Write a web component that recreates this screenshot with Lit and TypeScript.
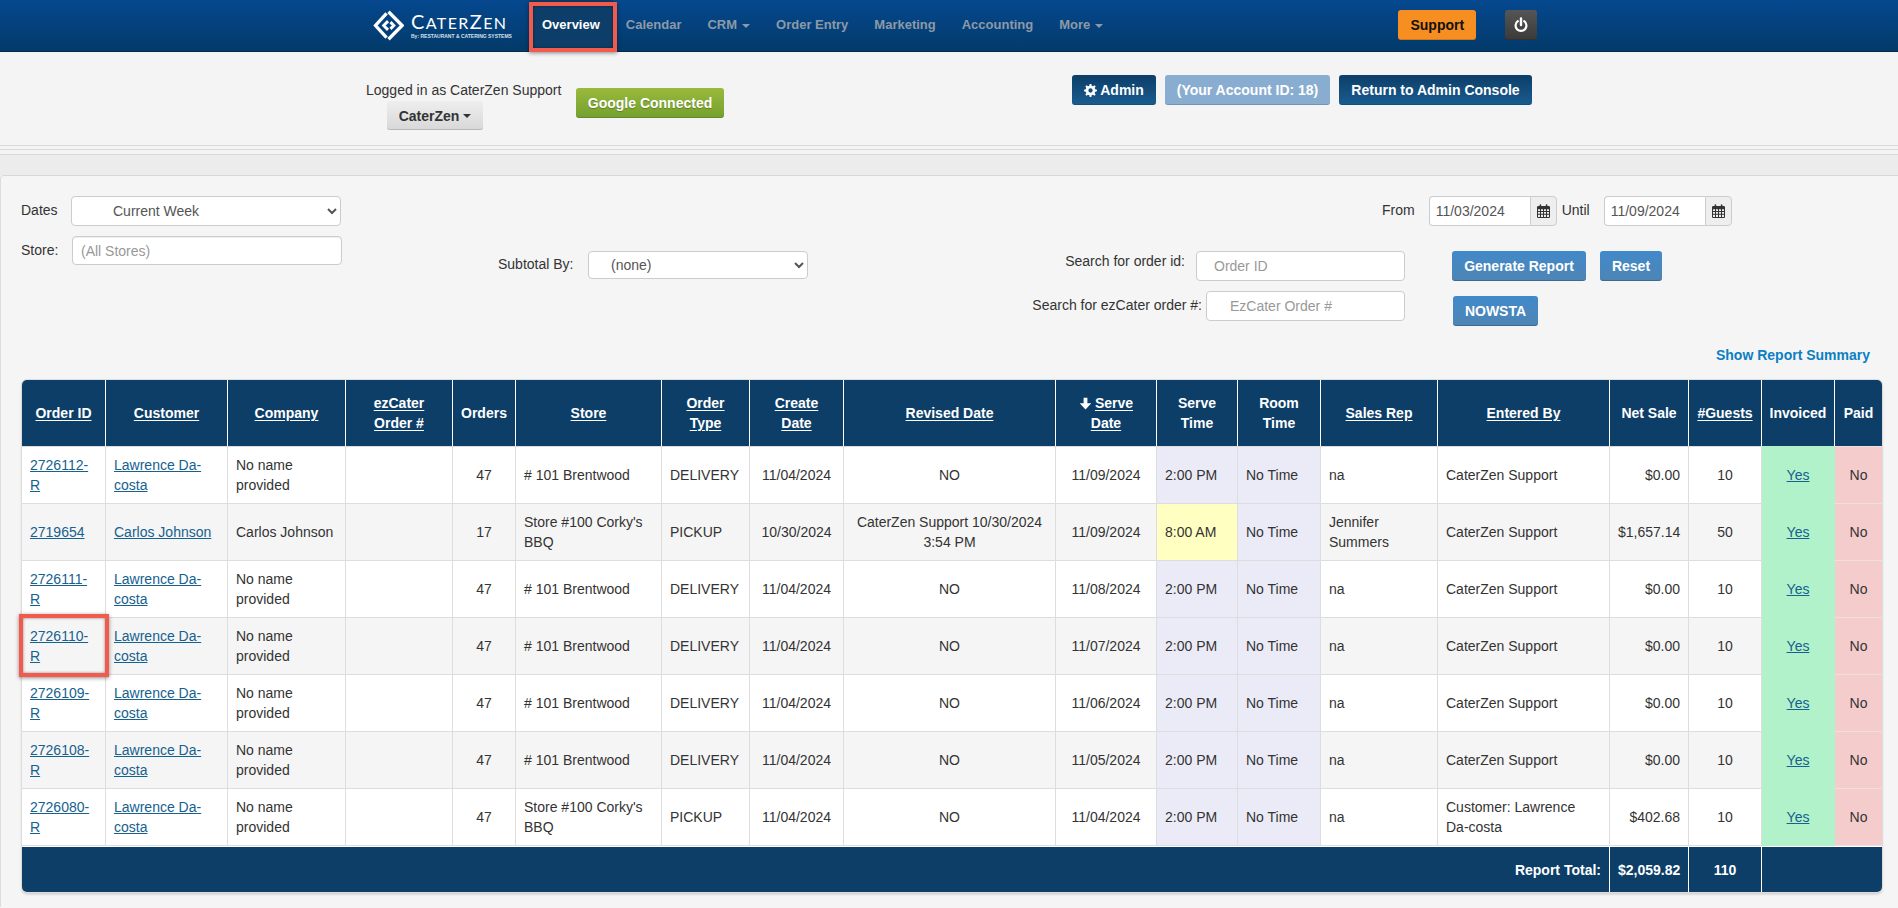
import { LitElement, html, css } from "lit";
import { customElement } from "lit/decorators.js";

type Row = {
  id: string; cust: string; comp: string; ord: string; store: string; type: string;
  created: string; revised: string; serve: string; time: string; rep: string;
  by: string; net: string; guests: string;
};

const LD = "Lawrence Da-costa";
const NN = "No name provided";
const S1 = "# 101 Brentwood";
const S2 = "Store #100 Corky's BBQ";
const CZ = "CaterZen Support";

const rows: Row[] = [
  { id: "2726112-R", cust: LD, comp: NN, ord: "47", store: S1, type: "DELIVERY", created: "11/04/2024", revised: "NO", serve: "11/09/2024", time: "2:00 PM", rep: "na", by: CZ, net: "$0.00", guests: "10" },
  { id: "2719654", cust: "Carlos Johnson", comp: "Carlos Johnson", ord: "17", store: S2, type: "PICKUP", created: "10/30/2024", revised: "CaterZen Support 10/30/2024 3:54 PM", serve: "11/09/2024", time: "8:00 AM", rep: "Jennifer Summers", by: CZ, net: "$1,657.14", guests: "50" },
  { id: "2726111-R", cust: LD, comp: NN, ord: "47", store: S1, type: "DELIVERY", created: "11/04/2024", revised: "NO", serve: "11/08/2024", time: "2:00 PM", rep: "na", by: CZ, net: "$0.00", guests: "10" },
  { id: "2726110-R", cust: LD, comp: NN, ord: "47", store: S1, type: "DELIVERY", created: "11/04/2024", revised: "NO", serve: "11/07/2024", time: "2:00 PM", rep: "na", by: CZ, net: "$0.00", guests: "10" },
  { id: "2726109-R", cust: LD, comp: NN, ord: "47", store: S1, type: "DELIVERY", created: "11/04/2024", revised: "NO", serve: "11/06/2024", time: "2:00 PM", rep: "na", by: CZ, net: "$0.00", guests: "10" },
  { id: "2726108-R", cust: LD, comp: NN, ord: "47", store: S1, type: "DELIVERY", created: "11/04/2024", revised: "NO", serve: "11/05/2024", time: "2:00 PM", rep: "na", by: CZ, net: "$0.00", guests: "10" },
  { id: "2726080-R", cust: LD, comp: NN, ord: "47", store: S2, type: "PICKUP", created: "11/04/2024", revised: "NO", serve: "11/04/2024", time: "2:00 PM", rep: "na", by: "Customer: Lawrence Da-costa", net: "$402.68", guests: "10" },
];

const widths = [84, 122, 118, 107, 63, 146, 88, 94, 212, 101, 81, 83, 117, 172, 79, 73, 73, 47];

const calIcon = html`<svg class="cal" viewBox="0 0 13 14" width="13" height="14"><path fill="#333" d="M0 3.2Q0 2 1.2 2H2.6V1.2Q2.6 .3 3.4 .3T4.2 1.2V2H8.8V1.2Q8.8 .3 9.6 .3T10.4 1.2V2H11.8Q13 2 13 3.2V12.8Q13 14 11.8 14H1.2Q0 14 0 12.8ZM1 5.2V7H3V5.2ZM4 5.2V7H6V5.2ZM7 5.2V7H9V5.2ZM10 5.2V7H12V5.2ZM1 8V9.8H3V8ZM4 8V9.8H6V8ZM7 8V9.8H9V8ZM10 8V9.8H12V8ZM1 10.8V13H3V10.8ZM4 10.8V13H6V10.8ZM7 10.8V13H9V10.8ZM10 10.8V13H12V10.8Z" fill-rule="evenodd"/></svg>`;

function gearPath(): string {
  const pts: string[] = [];
  const teeth = 8;
  for (let i = 0; i < teeth; i++) {
    const a = (i / teeth) * Math.PI * 2;
    const w = Math.PI / teeth;
    const seq: [number, number][] = [
      [9, a - w * 0.62],
      [12, a - w * 0.34],
      [12, a + w * 0.34],
      [9, a + w * 0.62],
    ];
    for (const [r, t] of seq) {
      pts.push(`${(12 + r * Math.sin(t)).toFixed(2)} ${(12 - r * Math.cos(t)).toFixed(2)}`);
    }
  }
  return `M${pts.join("L")}ZM12 8a4 4 0 1 0 0 8a4 4 0 0 0 0-8Z`;
}

const cogIcon = html`<svg class="cog" viewBox="0 0 24 24" width="13" height="13"><path fill="#fff" fill-rule="evenodd" d=${gearPath()} /></svg>`;

const powerIcon = html`<svg viewBox="0 0 14 16" width="14" height="16"><path d="M7 1.5V8" stroke="#fff" stroke-width="2.4" stroke-linecap="round" fill="none"/><path d="M3.8 4.2A5.4 5.4 0 1 0 10.2 4.2" stroke="#fff" stroke-width="2.2" stroke-linecap="round" fill="none"/></svg>`;

const downArrow = html`<svg viewBox="0 0 13 13" width="13" height="13" class="down"><path fill="#fff" d="M4.6 .8h3.8v5.4h3.9L6.5 12.4.7 6.2h3.9z"/></svg>`;

@customElement("app-root")
export class AppRoot extends LitElement {
  static styles = css`
    :host { display: block; height: 908px; overflow: hidden; font-family: "Liberation Sans", Arial, sans-serif; font-size: 14px; line-height: 20px; color: #333; background: #f5f5f5; }
    * { box-sizing: border-box; }

    .nav { height: 52px; background: linear-gradient(#05488f, #033a69); border-bottom: 1px solid #022a4c; display: flex; align-items: flex-start; padding-left: 373px; position: relative; }
    .logo { display: flex; width: 143px; height: 51px; align-items: flex-start; padding-top: 10px; gap: 7px; flex: none; }
    .logo-text { display: flex; flex-direction: column; color: #fff; margin-top: -1px; }
    .logo-name { font-family: Lato, "Liberation Sans", sans-serif; font-size: 20px; line-height: 24px; height: 24px; letter-spacing: 1.4px; white-space: nowrap; font-weight: 400; }
    .logo-name small { font-size: 16px; }
    .logo-sub { font-size: 5px; line-height: 6px; height: 6px; font-weight: 700; white-space: nowrap; color: #d5e0ea; }
    .nav-items { display: flex; height: 51px; flex: none; margin-left: 13px; }
    .nav-item { font-size: 13px; font-weight: 700; color: #8c9aa7; padding: 15px 13px 0; position: relative; white-space: nowrap; line-height: 20px; }
    .nav-item.active { color: #fff; background: #0d3e69; }
    .nav-item .caret { margin-left: 5px; border-top-color: #8c9aa7; }
    .caret { display: inline-block; width: 0; height: 0; vertical-align: middle; border-top: 4px solid #333; border-left: 4px solid transparent; border-right: 4px solid transparent; }
    .mark { position: absolute; z-index: 5; pointer-events: none; border: 4px solid #f15a4c; box-shadow: 0 1px 4px rgba(0,0,0,.45), inset 0 0 3px rgba(0,0,0,.45); }
    .mark.nav-mark { left: 0; right: -4px; top: 2px; bottom: -1px; }
    .nav-right { display: flex; gap: 29px; margin-left: 282px; padding-top: 10px; }
    .btn { display: inline-flex; align-items: center; justify-content: center; height: 30px; padding: 0 12px; border-radius: 3px; font-size: 14px; font-weight: 700; color: #fff; border: 0; white-space: nowrap; box-shadow: inset 0 -1px 0 rgba(0,0,0,.15); font-family: inherit; }
    .support { background: #f68e21; color: #111; width: 78px; padding: 0; }
    .power { background: linear-gradient(#555, #3a3a3a); width: 32px; padding: 0; }

    .head { height: 93px; background: #f4f4f4; display: flex; align-items: flex-start; padding-left: 366px; }
    .who { width: 196px; padding-top: 28px; display: flex; flex-direction: column; align-items: flex-start; flex: none; white-space: nowrap; }
    .tenant { margin: 1px 0 0 21px; height: 29px; width: 96px; padding: 0; background: linear-gradient(#eee, #d8d8d8); color: #333; }
    .tenant .caret { margin-left: 4px; }
    .google { margin: 36px 0 0 14px; width: 148px; padding: 0; background: linear-gradient(#9ab93c, #74a02e); text-shadow: 0 1px 1px rgba(0,0,0,.25); flex: none; }
    .admin { display: flex; gap: 9px; margin: 23px 0 0 348px; }
    .dark { background: linear-gradient(#0c3e68, #1a5c90); }
    .dark .cog { margin-right: 3px; }
    .w-admin { width: 84px; padding: 0; }
    .light { background: #89add0; width: 165px; padding: 0; }
    .w-return { width: 193px; padding: 0; }

    .rules { height: 30px; background: #ececec; border-top: 1px solid #d9d9d9; display: flex; flex-direction: column; }
    .rules i { display: block; background: #f4f4f4; border-bottom: 1px solid #d9d9d9; }
    .rules i.one { height: 4px; }
    .rules i.two { height: 5px; }
    .panel { background: #f5f5f5; border-top: 1px solid #d8d8d8; border-left: 1px solid #ddd; border-radius: 4px 0 0 0; padding: 20px 0 0 20px; height: 732px; }

    .filters { display: flex; height: 160px; align-items: flex-start; }
    .col-a { width: 477px; flex: none; display: flex; flex-direction: column; gap: 10px; }
    .field { display: flex; align-items: flex-start; }
    .field label { white-space: nowrap; line-height: 20px; }
    .col-a label { width: 50px; padding-top: 4px; flex: none; }
    select, input { font-family: inherit; font-size: 14px; color: #555; background: #fff; border: 1px solid #ccc; border-radius: 4px; height: 30px; outline: 0; }
    input::placeholder { color: #999; opacity: 1; }
    input.inset { box-shadow: inset 0 1px 1px rgba(0,0,0,.075); }
    .sel-dates { width: 270px; padding-left: 37px; }
    .in-store { width: 270px; padding-left: 8px; height: 29px; margin-left: 1px; }
    .col-b { width: 534px; flex: none; margin-top: 55px; }
    .col-b label { width: 90px; flex: none; padding-top: 3px; }
    .sel-sub { width: 220px; padding-left: 18px; height: 28px; }
    .col-c { flex: 1; display: flex; flex-direction: column; }
    .dates-row { display: flex; align-items: flex-start; padding-left: 350px; }
    .dates-row label { padding-top: 4px; }
    .dp { display: flex; height: 30px; flex: none; }
    .dp input { width: 101px; border-radius: 4px 0 0 4px; padding-left: 6px; border-right: 0; }
    .dp .addon { width: 27px; background: #eee; border: 1px solid #ccc; border-radius: 0 4px 4px 0; display: flex; align-items: center; justify-content: center; }
    .dp.first { margin: 0 5px 0 14px; }
    .dp.second { margin-left: 14px; }
    .search-row { display: flex; margin-top: 25px; align-items: flex-start; }
    .search { width: 373px; flex: none; display: flex; flex-direction: column; gap: 10px; }
    .search .field { justify-content: flex-end; }
    .search label { padding-top: 0; }
    .s-id label { margin-right: 11px; }
    .s-id input { width: 209px; padding-left: 17px; }
    .s-ez label { margin-right: 4px; padding-top: 4px; }
    .s-ez input { width: 199px; padding-left: 23px; }
    .actions { margin-left: 47px; display: flex; flex-direction: column; gap: 15px; align-items: flex-start; }
    .action-line { display: flex; gap: 14px; }
    .blue { background: linear-gradient(#4189ca, #4e85b4); padding: 0; box-shadow: inset 0 -1px 0 rgba(0,0,0,.2); }
    .w-gen { width: 134px; }
    .w-reset { width: 62px; }
    .w-now { width: 85px; margin-left: 1px; }

    .summary-line { display: flex; justify-content: flex-end; padding-right: 28px; margin-top: -11px; height: 35px; }
    .summary { color: #0b7fc2; font-weight: 700; font-size: 14px; }

    .table-wrap { width: 1860px; margin: 0 0 0 1px; border-radius: 5px; overflow: visible; box-shadow: 0 0 0 1px #ddd, 0 2px 3px rgba(0,0,0,.2); }
    table { border-collapse: separate; border-spacing: 0; table-layout: fixed; width: 1860px; font-size: 14px; }
    th { background: #0c3e68; color: #fff; font-weight: 700; text-align: center; vertical-align: middle; padding: 13px 2px; border-right: 1px solid #fff; height: 66px; }
    th:first-child { border-top-left-radius: 5px; }
    th:last-child { border-right: 0; border-top-right-radius: 5px; }
    th u { text-underline-offset: 2px; }
    th .down { vertical-align: -2px; margin-right: 3px; }
    td { padding: 8px; vertical-align: middle; border-right: 1px solid #ddd; border-top: 1px solid #ddd; height: 57px; background: #fff; position: relative; }
    tbody tr:nth-child(even) td { background: #f5f5f5; }
    tbody tr:last-child td { border-bottom: 1px solid #ddd; height: 58px; }
    td:last-child { border-right: 0; }
    td.c { text-align: center; }
    td.r { text-align: right; }
    a { color: #15618f; text-decoration: underline; text-underline-offset: 1px; }
    tbody tr td.lav { background: #ebebf7; }
    tbody tr td.yel { background: #ffffc2; }
    tbody tr td.inv { background: #b2f2ca; border-color: #b2f2ca; }
    tbody tr td.paid { background: #f5cccc; border-color: #f0dede; }
    .mark.id-mark { left: -3px; right: -4px; top: -4px; height: 63px; }
    tfoot td { background: #0c3e68; color: #fff; font-weight: 700; border-right: 1px solid #fff; border-bottom: 0; border-top: 1px solid #fff; height: 46px; }
    tfoot td:last-child { border-right: 0; border-bottom-right-radius: 5px; }
    tfoot td:first-child { border-bottom-left-radius: 5px; }
  `;

  render() {
    return html`
      <div class="nav">
        <div class="logo">
          <svg viewBox="0 0 32 32" width="31" height="31">
            <path fill="none" stroke="#fff" stroke-width="3.4" d="M14 3.6L2.6 16L14 28.4"/>
            <path fill="none" stroke="#fff" stroke-width="3.4" d="M16 1.8L30 16L16 30.2"/>
            <path fill="none" stroke="#fff" stroke-width="3" d="M15.5 11.5L11 16L15.5 20.5"/>
            <path fill="none" stroke="#fff" stroke-width="3" d="M18 12.5L21.5 16L18 19.5"/>
          </svg>
          <div class="logo-text">
            <span class="logo-name">C<small>ATER</small>Z<small>EN</small></span>
            <span class="logo-sub">By: RESTAURANT &amp; CATERING SYSTEMS</span>
          </div>
        </div>
        <div class="nav-items">
          <div class="nav-item active">Overview<span class="mark nav-mark"></span></div>
          <div class="nav-item">Calendar</div>
          <div class="nav-item">CRM<span class="caret"></span></div>
          <div class="nav-item">Order Entry</div>
          <div class="nav-item">Marketing</div>
          <div class="nav-item">Accounting</div>
          <div class="nav-item">More<span class="caret"></span></div>
        </div>
        <div class="nav-right">
          <div class="btn support">Support</div>
          <div class="btn power">${powerIcon}</div>
        </div>
      </div>

      <div class="head">
        <div class="who">
          <span>Logged in as CaterZen Support</span>
          <div class="btn tenant">CaterZen<span class="caret"></span></div>
        </div>
        <div class="btn google">Google Connected</div>
        <div class="admin">
          <div class="btn dark w-admin">${cogIcon}Admin</div>
          <div class="btn light">(Your Account ID: 18)</div>
          <div class="btn dark w-return">Return to Admin Console</div>
        </div>
      </div>

      <div class="rules"><i class="one"></i><i class="two"></i></div>

      <div class="panel">
        <div class="filters">
          <div class="col-a">
            <div class="field">
              <label>Dates</label>
              <select class="sel-dates"><option>Current Week</option></select>
            </div>
            <div class="field">
              <label>Store:</label>
              <input class="in-store inset" placeholder="(All Stores)" />
            </div>
          </div>
          <div class="col-b">
            <div class="field">
              <label>Subtotal By:</label>
              <select class="sel-sub"><option>(none)</option></select>
            </div>
          </div>
          <div class="col-c">
            <div class="dates-row">
              <label>From</label>
              <div class="dp first"><input value="11/03/2024" /><div class="addon">${calIcon}</div></div>
              <label>Until</label>
              <div class="dp second"><input value="11/09/2024" /><div class="addon">${calIcon}</div></div>
            </div>
            <div class="search-row">
              <div class="search">
                <div class="field s-id"><label>Search for order id:</label><input placeholder="Order ID" /></div>
                <div class="field s-ez"><label>Search for ezCater order #:</label><input placeholder="EzCater Order #" /></div>
              </div>
              <div class="actions">
                <div class="action-line">
                  <div class="btn blue w-gen">Generate Report</div>
                  <div class="btn blue w-reset">Reset</div>
                </div>
                <div class="btn blue w-now">NOWSTA</div>
              </div>
            </div>
          </div>
        </div>

        <div class="summary-line"><span class="summary">Show Report Summary</span></div>

        <div class="table-wrap">
          <table>
            <colgroup>${widths.map((w) => html`<col style="width:${w}px" />`)}</colgroup>
            <thead>
              <tr>
                <th><u>Order ID</u></th>
                <th><u>Customer</u></th>
                <th><u>Company</u></th>
                <th><u>ezCater</u><br /><u>Order #</u></th>
                <th>Orders</th>
                <th><u>Store</u></th>
                <th><u>Order</u><br /><u>Type</u></th>
                <th><u>Create</u><br /><u>Date</u></th>
                <th><u>Revised Date</u></th>
                <th>${downArrow}<u>Serve</u><br /><u>Date</u></th>
                <th>Serve<br />Time</th>
                <th>Room<br />Time</th>
                <th><u>Sales Rep</u></th>
                <th><u>Entered By</u></th>
                <th>Net Sale</th>
                <th><u>#Guests</u></th>
                <th>Invoiced</th>
                <th>Paid</th>
              </tr>
            </thead>
            <tbody>
              ${rows.map(
                (r) => html`<tr>
                  <td><a>${r.id}</a>${r.id === "2726110-R" ? html`<span class="mark id-mark"></span>` : ""}</td>
                  <td><a>${r.cust}</a></td>
                  <td>${r.comp}</td>
                  <td></td>
                  <td class="c">${r.ord}</td>
                  <td>${r.store}</td>
                  <td>${r.type}</td>
                  <td class="c">${r.created}</td>
                  <td class="c">${r.revised}</td>
                  <td class="c">${r.serve}</td>
                  <td class=${r.time === "8:00 AM" ? "yel" : "lav"}>${r.time}</td>
                  <td class="lav">No Time</td>
                  <td>${r.rep}</td>
                  <td>${r.by}</td>
                  <td class="r">${r.net}</td>
                  <td class="c">${r.guests}</td>
                  <td class="c inv"><a>Yes</a></td>
                  <td class="c paid">No</td>
                </tr>`
              )}
            </tbody>
            <tfoot>
              <tr>
                <td class="r" colspan="14">Report Total:</td>
                <td class="r">$2,059.82</td>
                <td class="c">110</td>
                <td colspan="2"></td>
              </tr>
            </tfoot>
          </table>
        </div>
      </div>
    `;
  }
}
